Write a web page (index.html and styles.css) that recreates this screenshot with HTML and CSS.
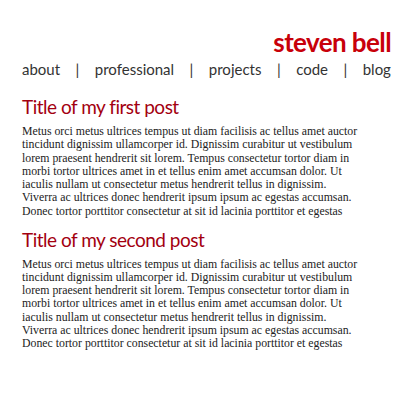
FILE: index.html
```html
<!DOCTYPE html>
<html>
<head>
<meta charset="utf-8">
<link rel="stylesheet" href="styles.css">
</head>
<body>
<header class="site-header">
  <h1 class="site-title">steven bell</h1>
  <nav class="site-nav">
    <a href="#">about</a><span class="sep">|</span>
    <a href="#">professional</a><span class="sep">|</span>
    <a href="#">projects</a><span class="sep">|</span>
    <a href="#">code</a><span class="sep">|</span>
    <a href="#">blog</a>
  </nav>
</header>
<main class="posts">
  <article class="post">
    <h2 class="post-title">Title of my first post</h2>
    <p class="post-body">Metus orci metus ultrices tempus ut diam facilisis ac tellus amet auctor tincidunt dignissim ullamcorper id. Dignissim curabitur ut vestibulum lorem praesent hendrerit sit lorem. Tempus consectetur tortor diam in morbi tortor ultrices amet in et tellus enim amet accumsan dolor. Ut iaculis nullam ut consectetur metus hendrerit tellus in dignissim. Viverra ac ultrices donec hendrerit ipsum ipsum ac egestas accumsan. Donec tortor porttitor consectetur at sit id lacinia porttitor et egestas</p>
  </article>
  <article class="post">
    <h2 class="post-title">Title of my second post</h2>
    <p class="post-body">Metus orci metus ultrices tempus ut diam facilisis ac tellus amet auctor tincidunt dignissim ullamcorper id. Dignissim curabitur ut vestibulum lorem praesent hendrerit sit lorem. Tempus consectetur tortor diam in morbi tortor ultrices amet in et tellus enim amet accumsan dolor. Ut iaculis nullam ut consectetur metus hendrerit tellus in dignissim. Viverra ac ultrices donec hendrerit ipsum ipsum ac egestas accumsan. Donec tortor porttitor consectetur at sit id lacinia porttitor et egestas</p>
  </article>
</main>
</body>
</html>
```
FILE: styles.css
```css
html, body { margin: 0; padding: 0; background: #fff; }
body { padding: 0 9px 0 22px; }
.site-header { padding-top: 27px; }
.site-title {
  margin: 0;
  text-align: right;
  font-family: Lato, sans-serif;
  font-weight: 700;
  font-size: 26px;
  line-height: 30px;
  letter-spacing: -0.6px;
  color: #c8000a;
}
.site-nav {
  display: flex;
  justify-content: space-between;
  margin-top: 2px;
  font-family: Lato, sans-serif;
  font-size: 15px;
  line-height: 20px;
  color: #333;
}
.site-nav a { color: #333; text-decoration: none; }
.sep { color: #333; }
.posts { margin-top: 17px; }
.post-title {
  margin: 0 0 7px;
  font-family: Lato, sans-serif;
  font-weight: 400;
  font-size: 19px;
  line-height: 22px;
  letter-spacing: -0.5px;
  color: #a30010;
}
.post-body {
  margin: 0 0 10.5px;
  width: 338px;
  font-family: "Liberation Serif", serif;
  font-size: 11.8px;
  line-height: 13.3px;
  color: #222;
}
```
